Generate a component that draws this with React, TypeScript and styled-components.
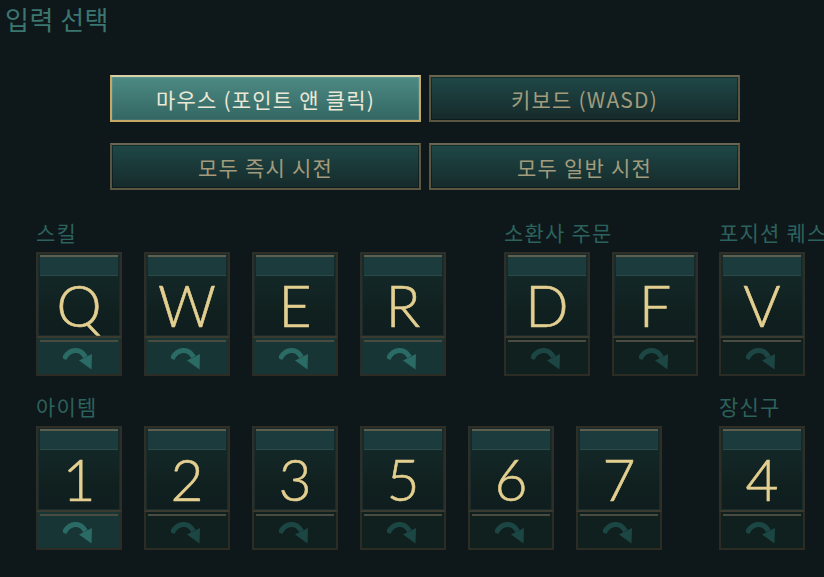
import React from 'react';
import styled, { createGlobalStyle } from 'styled-components';

type KeyData = {
  label: string;
  quick?: boolean;
};

type Group = {
  title: string;
  keys: KeyData[];
  offset: number;
};

const skillGroups: Group[] = [
  {
    title: '스킬',
    offset: 0,
    keys: [
      { label: 'Q', quick: true },
      { label: 'W', quick: true },
      { label: 'E', quick: true },
      { label: 'R', quick: true }
    ]
  },
  { title: '소환사 주문', offset: 58, keys: [{ label: 'D' }, { label: 'F' }] },
  { title: '포지션 퀘스트', offset: 21, keys: [{ label: 'V' }] }
];

const itemGroups: Group[] = [
  {
    title: '아이템',
    offset: 0,
    keys: [
      { label: '1', quick: true },
      { label: '2' },
      { label: '3' },
      { label: '5' },
      { label: '6' },
      { label: '7' }
    ]
  },
  { title: '장신구', offset: 57, keys: [{ label: '4' }] }
];

function CastArrow({ quick }: { quick?: boolean }) {
  const color = quick ? '#2b6b66' : '#1c4643';
  return (
    <svg width="32" height="25" viewBox="0 0 32 25">
      <path
        d="M1 13 C 6 3, 17 1, 22.5 11"
        fill="none"
        stroke={color}
        strokeWidth="5"
      />
      <path d="M16 14.5 L29 8 L28.5 23.5 Z" fill={color} />
    </svg>
  );
}

function KeyCap({ data }: { data: KeyData }) {
  return (
    <Key>
      <Face>
        <Strip />
        <Letter>{data.label}</Letter>
      </Face>
      <Base $quick={data.quick}>
        <CastArrow quick={data.quick} />
      </Base>
    </Key>
  );
}

function KeyRow({ groups }: { groups: Group[] }) {
  return (
    <Row>
      {groups.map((g) => (
        <Section key={g.title} $offset={g.offset}>
          <SectionTitle>{g.title}</SectionTitle>
          <Keys>
            {g.keys.map((k) => (
              <KeyCap key={k.label} data={k} />
            ))}
          </Keys>
        </Section>
      ))}
    </Row>
  );
}

function App() {
  return (
    <>
      <GlobalStyle />
      <Page>
        <Title>입력 선택</Title>
        <Buttons>
          <ModeButton $selected>마우스 (포인트 앤 클릭)</ModeButton>
          <ModeButton>키보드 (WASD)</ModeButton>
          <ModeButton>모두 즉시 시전</ModeButton>
          <ModeButton>모두 일반 시전</ModeButton>
        </Buttons>
        <KeyRow groups={skillGroups} />
        <ItemsRow>
          <KeyRow groups={itemGroups} />
        </ItemsRow>
      </Page>
    </>
  );
}

const GlobalStyle = createGlobalStyle`
  html, body {
    margin: 0;
    padding: 0;
    background: #0e1719;
    overflow: hidden;
  }
  body {
    font-family: "Noto Sans CJK KR", "Noto Sans", sans-serif;
  }
`;

const Page = styled.div`
  width: 824px;
  height: 577px;
  overflow: hidden;
  padding: 0 0 0 36px;
  box-sizing: border-box;
`;

const Title = styled.h1`
  margin: 0 0 0 -31px;
  padding-top: 1px;
  font-size: 26px;
  font-weight: 400;
  letter-spacing: 0.5px;
  line-height: 36px;
  color: #3b7670;
`;

const Buttons = styled.div`
  display: grid;
  grid-template-columns: 311px 311px;
  grid-auto-rows: 47px;
  column-gap: 8px;
  row-gap: 21px;
  margin: 38px 0 0 74px;
`;

const ModeButton = styled.div<{ $selected?: boolean }>`
  display: flex;
  align-items: center;
  justify-content: center;
  box-sizing: border-box;
  font-size: 21px;
  letter-spacing: 1.2px;
  border: 2px solid ${(p) => (p.$selected ? '#c6a866' : '#5a5642')};
  border-top-color: ${(p) => (p.$selected ? '#d9d0a8' : '#6b6650')};
  background: ${(p) =>
    p.$selected
      ? 'linear-gradient(to bottom, #4d8a84, #336662)'
      : 'linear-gradient(to bottom, #1f4747, #162a2a)'};
  color: ${(p) => (p.$selected ? '#ece8d6' : '#a29c7c')};
  box-shadow: inset 0 0 0 1px ${(p) => (p.$selected ? 'rgba(255,255,255,0.08)' : 'rgba(0,0,0,0.35)')};
`;

const Row = styled.div`
  display: flex;
  align-items: flex-start;
`;

const ItemsRow = styled.div`
  margin-top: 16px;
`;

const Section = styled.div<{ $offset: number }>`
  display: flex;
  flex-direction: column;
  margin-left: ${(p) => p.$offset}px;
`;

const SectionTitle = styled.div`
  font-size: 21px;
  letter-spacing: 1.2px;
  line-height: 28px;
  height: 28px;
  margin: 28px 0 6px;
  color: #2c625d;
  white-space: nowrap;
  ${ItemsRow} & {
    margin-top: 0;
  }
`;

const Keys = styled.div`
  display: flex;
  gap: 22px;
`;

const Key = styled.div`
  width: 86px;
  display: flex;
  flex-direction: column;
`;

const Face = styled.div`
  height: 86px;
  box-sizing: border-box;
  border: 2px solid #2f2f27;
  border-bottom-color: #3a3a2f;
  background: linear-gradient(to bottom, #162c2d, #10201f 70%, #0f1d1e);
  display: flex;
  flex-direction: column;
  box-shadow: inset 0 0 0 1px #1a2b2b;
`;

const Strip = styled.div`
  height: 18px;
  flex: none;
  background: #1c3b3c;
  border-top: 2px solid #5d5e4e;
  border-bottom: 1px solid #2c4947;
  margin: 1px 2px 0;
`;

const Letter = styled.div`
  flex: 1;
  display: flex;
  align-items: center;
  justify-content: center;
  font-family: "Lato", "Noto Sans", sans-serif;
  font-size: 57px;
  font-weight: 300;
  -webkit-text-stroke: 0.6px #e3cf90;
  color: #e3cf90;
  line-height: 1;
  padding-bottom: 2px;
`;

const Base = styled.div<{ $quick?: boolean }>`
  height: 38px;
  box-sizing: border-box;
  border: 2px solid #2c2c24;
  border-top: none;
  background: ${(p) => (p.$quick ? '#183535' : '#10201f')};
  display: flex;
  align-items: center;
  justify-content: center;
  padding-top: 4px;
  position: relative;
  &::before {
    content: '';
    position: absolute;
    top: 2px;
    left: 2px;
    right: 2px;
    height: 2px;
    background: #4a4c42;
  }
`;

export default App;
